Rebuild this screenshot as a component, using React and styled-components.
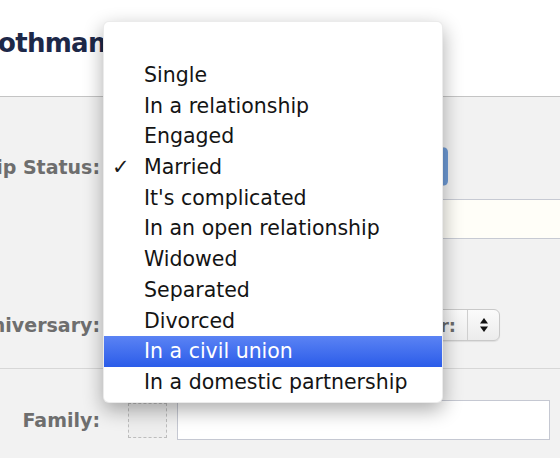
import styled, { createGlobalStyle } from "styled-components";

const GlobalStyle = createGlobalStyle`
  html, body {
    margin: 0;
    padding: 0;
    background: #f2f2f2;
  }
  body {
    font-family: "DejaVu Sans", "Noto Sans", sans-serif;
  }
`;

const Page = styled.div`
  position: relative;
  width: 560px;
  height: 458px;
  overflow: hidden;
  background: #f2f2f2;
`;

const Header = styled.div`
  height: 97px;
  background: #fff;
  border-bottom: 1px solid #c4c4c4;
  box-sizing: border-box;
  padding-top: 27px;
`;

const Title = styled.h1`
  margin: 0 0 0 -2px;
  font-size: 26px;
  line-height: 32px;
  font-weight: 700;
  letter-spacing: -0.7px;
  color: #1d2848;
`;

const Section = styled.div`
  padding-top: ${(p) => p.$top || 0}px;
  padding-bottom: ${(p) => p.$bottom || 0}px;
  border-bottom: ${(p) => (p.$line ? "1px solid #d7d7d7" : "none")};
`;

const Field = styled.div`
  display: grid;
  grid-template-columns: 100px 1fr;
  column-gap: 13px;
  align-items: center;
`;

const Label = styled.div`
  display: flex;
  justify-content: flex-end;
  overflow: hidden;
  font-size: 19px;
  font-weight: 700;
  color: #6e6e6e;

  span {
    flex: none;
    white-space: nowrap;
  }
`;

const StatusSelect = styled.div`
  width: 335px;
  height: 39px;
  box-sizing: border-box;
  border: 1px solid #a9b8cf;
  border-right: 5px solid #6f9bd6;
  border-radius: 5px;
  background: linear-gradient(#fafafa, #e6e6e6);
`;

const TextBox = styled.div`
  margin: 13px 0 0 113px;
  height: 40px;
  box-sizing: border-box;
  border: 1px solid #c7cad3;
  border-right: none;
  background: #fffef8;
`;

const Selects = styled.div`
  display: flex;
  justify-content: flex-end;
  width: 387px;
`;

const DateSelect = styled.div`
  display: flex;
  align-items: stretch;
  width: ${(p) => p.$w}px;
  height: 32px;
  box-sizing: border-box;
  border: 1px solid #c9c9c9;
  border-radius: 6px;
  background: linear-gradient(#fbfbfb, #ececec);
  box-shadow: 0 1px 1px rgba(0, 0, 0, 0.08);
`;

const SelectText = styled.span`
  flex: 1;
  display: flex;
  align-items: center;
  justify-content: flex-end;
  padding-right: 11px;
  font-size: 18px;
  font-weight: 700;
  color: #6a6a6a;
`;

const Stepper = styled.span`
  width: 31px;
  display: flex;
  align-items: center;
  justify-content: center;
  border-left: 1px solid #cfcfcf;
`;

const FamilyRow = styled.div`
  display: flex;
  align-items: center;
`;

const FamilyLabel = styled(Label)`
  width: 100px;
  flex: none;
`;

const PhotoBox = styled.div`
  margin-left: 28px;
  width: 39px;
  height: 35px;
  box-sizing: border-box;
  border: 1px dashed #bdbdbd;
  background: #eeeeee;
`;

const FamilyInput = styled.div`
  margin-left: 10px;
  width: 373px;
  height: 40px;
  box-sizing: border-box;
  border: 1px solid #c5c8d2;
  background: #fff;
`;

const Menu = styled.ul`
  position: absolute;
  left: 103px;
  top: 21px;
  width: 340px;
  height: 382px;
  box-sizing: border-box;
  margin: 0;
  padding: 38px 0 0;
  list-style: none;
  background: #fff;
  border-radius: 6px;
  border: 1px solid rgba(0, 0, 0, 0.08);
  box-shadow: 0 7px 20px rgba(0, 0, 0, 0.33);
`;

const Item = styled.li`
  position: relative;
  height: 30.7px;
  line-height: 30.7px;
  padding-left: 40px;
  font-size: 20.5px;
  color: ${(p) => (p.$active ? "#fff" : "#141414")};
  background: ${(p) =>
    p.$active ? "linear-gradient(#5b83f4, #2b5ce9)" : "transparent"};
  white-space: nowrap;
`;

const Check = styled.span`
  position: absolute;
  left: 8px;
  top: 0;
  font-size: 21px;
  font-weight: 700;
  color: #1a1a1a;
`;

const StepperIcon = () => (
  <svg width="10" height="16" viewBox="0 0 10 16">
    <path d="M5 1 L9 6.5 H1 Z" fill="#111" />
    <path d="M5 15 L9 9.5 H1 Z" fill="#111" />
  </svg>
);

const statuses = [
  "Single",
  "In a relationship",
  "Engaged",
  "Married",
  "It's complicated",
  "In an open relationship",
  "Widowed",
  "Separated",
  "Divorced",
  "In a civil union",
  "In a domestic partnership",
];

export default function App() {
  return (
    <Page>
      <GlobalStyle />
      <Header>
        <Title>othman</Title>
      </Header>

      <Section $top={50}>
        <Field>
          <Label>
            <span>Relationship Status:</span>
          </Label>
          <StatusSelect />
        </Field>
        <TextBox />
      </Section>

      <Section $top={70} $bottom={27} $line>
        <Field>
          <Label>
            <span>Anniversary:</span>
          </Label>
          <Selects>
            <DateSelect $w={120}>
              <SelectText>Year:</SelectText>
              <Stepper>
                <StepperIcon />
              </Stepper>
            </DateSelect>
          </Selects>
        </Field>
      </Section>

      <Section $top={31}>
        <FamilyRow>
          <FamilyLabel>
            <span>Family:</span>
          </FamilyLabel>
          <PhotoBox />
          <FamilyInput />
        </FamilyRow>
      </Section>

      <Menu>
        {statuses.map((s) => (
          <Item key={s} $active={s === "In a civil union"}>
            {s === "Married" && <Check>✓</Check>}
            {s}
          </Item>
        ))}
      </Menu>
    </Page>
  );
}
